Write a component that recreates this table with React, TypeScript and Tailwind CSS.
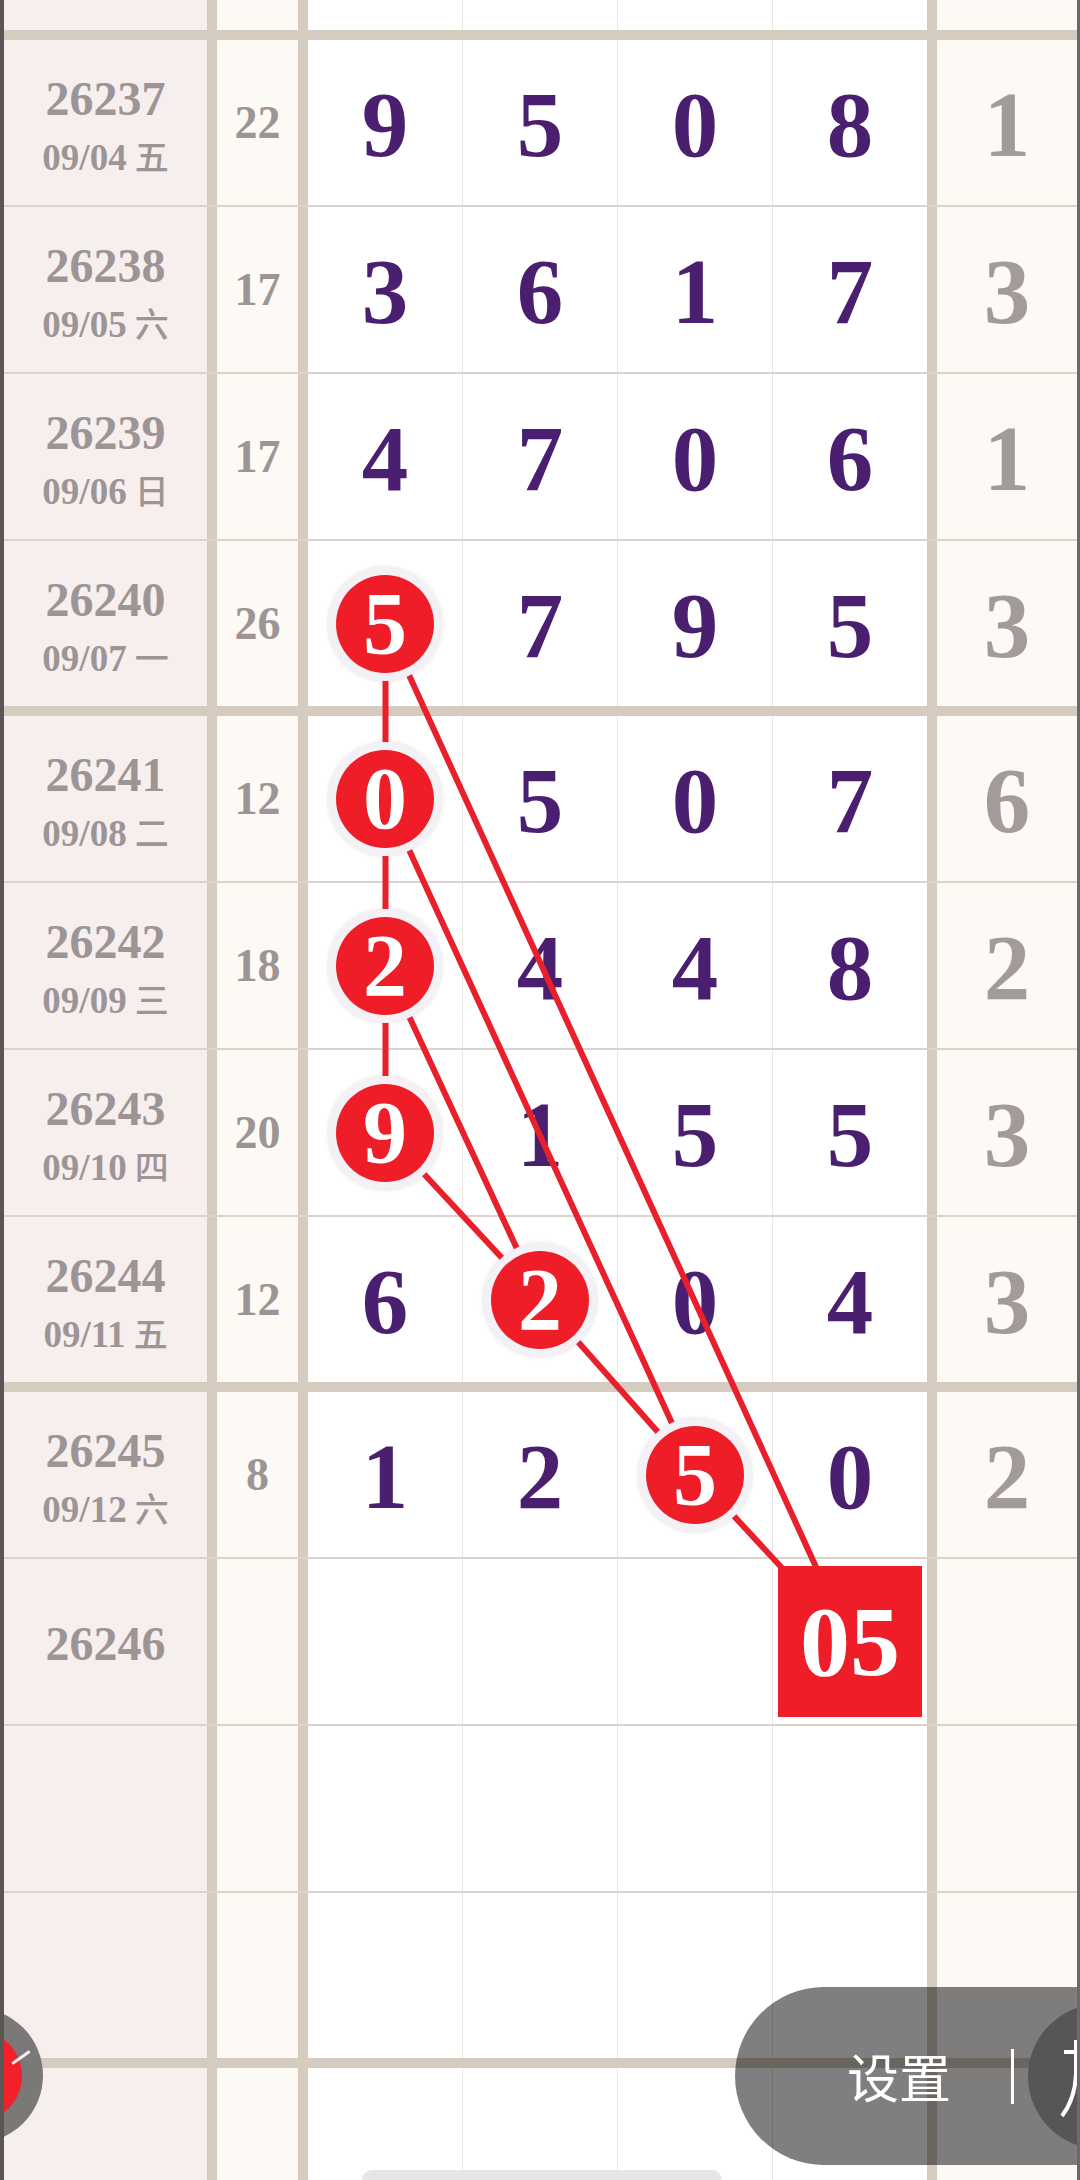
import React from "react";

type Row = {
  issue?: string;
  date?: string;
  wd?: string;
  sum?: string;
  d?: string[];
  last?: string;
  hit?: number;
  square?: number;
};

const rows: Row[] = [
  { issue: "26237", date: "09/04", wd: "五", sum: "22", d: ["9", "5", "0", "8"], last: "1" },
  { issue: "26238", date: "09/05", wd: "六", sum: "17", d: ["3", "6", "1", "7"], last: "3" },
  { issue: "26239", date: "09/06", wd: "日", sum: "17", d: ["4", "7", "0", "6"], last: "1" },
  { issue: "26240", date: "09/07", wd: "一", sum: "26", d: ["5", "7", "9", "5"], last: "3", hit: 0 },
  { issue: "26241", date: "09/08", wd: "二", sum: "12", d: ["0", "5", "0", "7"], last: "6", hit: 0 },
  { issue: "26242", date: "09/09", wd: "三", sum: "18", d: ["2", "4", "4", "8"], last: "2", hit: 0 },
  { issue: "26243", date: "09/10", wd: "四", sum: "20", d: ["9", "1", "5", "5"], last: "3", hit: 0 },
  { issue: "26244", date: "09/11", wd: "五", sum: "12", d: ["6", "2", "0", "4"], last: "3", hit: 1 },
  { issue: "26245", date: "09/12", wd: "六", sum: "8", d: ["1", "2", "5", "0"], last: "2", hit: 2 },
  { issue: "26246", square: 3 },
  {},
  {},
];

const serif = "font-['Liberation_Serif','Times_New_Roman',serif]";

function Ball({ v }: { v: string }) {
  return (
    <div className="relative z-20 flex h-[98px] w-[98px] items-center justify-center rounded-full bg-[#ee1d27] shadow-[0_0_0_8px_#f3f1f5,0_0_3px_9px_rgba(120,110,130,0.14)]">
      <span className={`${serif} text-[88px] font-bold leading-none text-white`}>{v}</span>
    </div>
  );
}

function DataRow({ r, h }: { r: Row; h: string }) {
  const dcls = [
    "w-[155px] border-r border-[#ebe7e3]",
    "w-[155px] border-r border-[#ebe7e3]",
    "w-[155px] border-r border-[#ebe7e3]",
    "w-[164px] border-r-[10px] border-[#d5cbbf]",
  ];
  return (
    <div className={`flex ${h}`}>
      <div className="flex w-[213px] flex-col items-center justify-center border-r-[10px] border-[#d5cbbf] bg-[#f7efee] pt-[5px]">
        {r.issue && (
          <div className={`${serif} text-[48px] font-bold leading-none text-[#9d9595]`}>{r.issue}</div>
        )}
        {r.date && (
          <div className="mt-[16px] flex items-baseline whitespace-nowrap leading-none text-[#9d9595]">
            <span className={`${serif} text-[37px] font-bold`}>{r.date}</span>
            <span className="ml-[8px] font-['Noto_Sans_CJK_SC',sans-serif] text-[34px] font-medium">{r.wd}</span>
          </div>
        )}
      </div>
      <div className="flex w-[91px] items-center justify-center border-r-[10px] border-[#d5cbbf] bg-[#fdfaf6]">
        {r.sum && <span className={`${serif} text-[46px] font-bold leading-none text-[#9d9595]`}>{r.sum}</span>}
      </div>
      {dcls.map((c, i) => (
        <div key={i} className={`flex items-center justify-center bg-white ${c}`}>
          {r.d && r.hit === i ? (
            <Ball v={r.d[i]} />
          ) : r.d ? (
            <span className={`${serif} pt-[4px] text-[93px] font-bold leading-none text-[#4a1f6f]`}>{r.d[i]}</span>
          ) : null}
          {r.square === i && (
            <div className="relative z-20 flex h-[151px] w-[144px] items-center justify-center bg-[#ef1d28]">
              <span className={`${serif} text-[100px] font-bold leading-none text-white`}>05</span>
            </div>
          )}
        </div>
      ))}
      <div className="flex flex-1 items-center justify-center bg-[#fdfaf6]">
        {r.last && <span className={`${serif} pt-[4px] text-[93px] font-bold leading-none text-[#a39b9b]`}>{r.last}</span>}
      </div>
    </div>
  );
}

export default function App() {
  const X = [385.5, 540.5, 695.5, 850];
  const Y = (i: number) => {
    const group = Math.floor(i / 4);
    const inGroup = i % 4;
    return 40 + group * 676 + inGroup * 167 + 82.5;
  };
  const segs: [number, number, number, number][] = [
    [X[0], Y(3), X[0], Y(6)],
    [X[0], Y(3), X[3], Y(9)],
    [X[0], Y(4), X[2], Y(8)],
    [X[0], Y(5), X[1], Y(7)],
    [X[0], Y(6), X[1], Y(7)],
    [X[1], Y(7), X[2], Y(8)],
    [X[2], Y(8), X[3], Y(9)],
  ];

  return (
    <div className="relative h-[2180px] w-[1080px] overflow-hidden border-l-[4px] border-r-[3px] border-l-[#5a5656] border-r-[#6d6868] bg-[#d5cbbf]">
      <DataRow r={{}} h="h-[30px]" />
      <div className="h-[10px] bg-[#d5cbbf]" />
      {rows.map((r, i) => (
        <React.Fragment key={i}>
          <DataRow r={r} h="h-[165px]" />
          {i % 4 === 3 ? (
            <div className="h-[10px] bg-[#d5cbbf]" />
          ) : (
            <div className="h-[2px] bg-[#dcd4cc]" />
          )}
        </React.Fragment>
      ))}
      <DataRow r={{}} h="h-[112px]" />

      <svg
        className="pointer-events-none absolute left-[-4px] top-0 z-10"
        width="1080"
        height="2180"
        viewBox="0 0 1080 2180"
      >
        {segs.map((s, i) => (
          <line key={i} x1={s[0]} y1={s[1]} x2={s[2]} y2={s[3]} stroke="#e8202b" strokeWidth="6" />
        ))}
      </svg>

      {/* left floating button */}
      <div className="absolute left-[-96px] top-[2008px] z-30 flex h-[135px] w-[135px] items-center justify-center rounded-full bg-[#7b7878]">
        <div className="relative h-[92px] w-[92px] rounded-full bg-[#f2202a]">
          <div className="absolute left-[80px] top-[26px] h-[3px] w-[22px] -rotate-[35deg] rounded bg-white/90" />
        </div>
      </div>

      {/* right floating pill */}
      <div className="absolute left-[731px] top-[1987px] z-30 flex h-[178px] w-[420px] items-center rounded-l-full bg-black/50">
        <span className="ml-[112px] shrink-0 whitespace-nowrap font-['Noto_Sans_CJK_SC',sans-serif] text-[52px] font-normal leading-none text-white">
          设置
        </span>
        <div className="ml-[60px] h-[55px] w-[3px] shrink-0 bg-white" />
        <div className="relative ml-[14px] h-[145px] w-[145px] shrink-0 rounded-full bg-[#565656]">
          <svg className="absolute left-0 top-0" width="145" height="145" viewBox="0 0 145 145">
            <path d="M36 48 L60 48" stroke="white" strokeWidth="4" fill="none" />
            <path d="M48 36 L48 70 Q47 95 34 112" stroke="white" strokeWidth="4" fill="none" />
          </svg>
        </div>
      </div>

      {/* home indicator */}
      <div className="absolute bottom-0 left-[358px] z-30 h-[10px] w-[360px] rounded-t-full bg-[#e6e6e6]" />
    </div>
  );
}
